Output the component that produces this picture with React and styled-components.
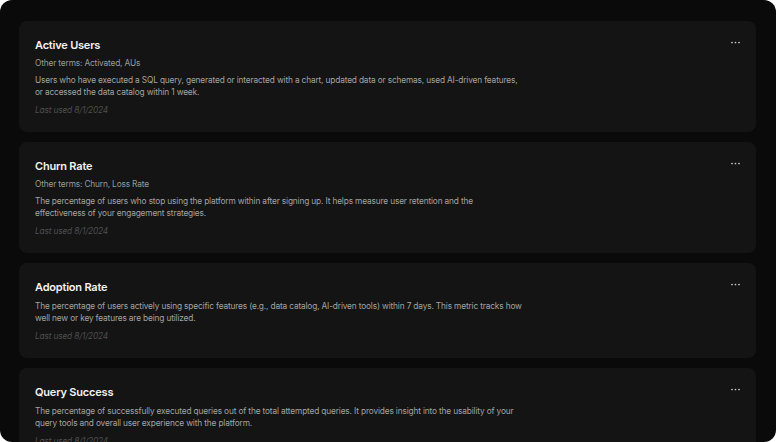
import React from "react";
import styled, { createGlobalStyle } from "styled-components";

const Global = createGlobalStyle`
  html, body { margin: 0; padding: 0; background: #ffffff; }
  body { font-family: Inter, "Noto Sans", sans-serif; -webkit-font-smoothing: antialiased; }
`;

const Frame = styled.div`
  width: 776px;
  height: 442px;
  box-sizing: border-box;
  background: #0a0a0a;
  border-radius: 12px;
  overflow: hidden;
  padding: 21px 20px 0 19px;
  display: flex;
  flex-direction: column;
  gap: 10.5px;
`;

const Card = styled.div`
  flex: none;
  background: #141414;
  border-radius: 8px;
  padding: 16px 16px 15.5px 16px;
  display: flex;
  align-items: flex-start;
  justify-content: space-between;
`;

const Body = styled.div`
  display: flex;
  flex-direction: column;
`;

const Title = styled.div`
  font-size: 11px;
  line-height: 16px;
  font-weight: 600;
  letter-spacing: -0.2px;
  color: #f2f2f2;
`;

const Small = styled.div`
  font-size: 8.3px;
  line-height: 12px;
  letter-spacing: -0.15px;
`;

const Terms = styled(Small)`
  margin-top: 4px;
  color: #9a9a9a;
`;

const Desc = styled(Small)`
  margin-top: 5px;
  width: 490px;
  color: #a3a3a3;
`;

const Used = styled(Small)`
  margin-top: 6px;
  font-style: italic;
  color: #4f4f4f;
`;

const MoreButton = styled.button`
  border: none;
  background: transparent;
  padding: 0;
  margin-top: 2px;
  width: 9px;
  height: 6px;
  display: flex;
  align-items: center;
  justify-content: center;
  color: #cfcfcf;
  cursor: pointer;
`;

const items = [
  {
    title: "Active Users",
    terms: "Other terms: Activated, AUs",
    desc: "Users who have executed a SQL query, generated or interacted with a chart, updated data or schemas, used AI-driven features, or accessed the data catalog within 1 week.",
  },
  {
    title: "Churn Rate",
    terms: "Other terms: Churn, Loss Rate",
    desc: "The percentage of users who stop using the platform within after signing up. It helps measure user retention and the effectiveness of your engagement strategies.",
  },
  {
    title: "Adoption Rate",
    desc: "The percentage of users actively using specific features (e.g., data catalog, AI-driven tools) within 7 days. This metric tracks how well new or key features are being utilized.",
  },
  {
    title: "Query Success",
    desc: "The percentage of successfully executed queries out of the total attempted queries. It provides insight into the usability of your query tools and overall user experience with the platform.",
  },
];

function Dots() {
  return (
    <svg width="9" height="3" viewBox="0 0 9 3">
      <circle cx="1" cy="1.5" r="0.85" fill="currentColor" />
      <circle cx="4.5" cy="1.5" r="0.85" fill="currentColor" />
      <circle cx="8" cy="1.5" r="0.85" fill="currentColor" />
    </svg>
  );
}

export default function App() {
  return (
    <>
      <Global />
      <Frame>
        {items.map((it) => (
          <Card key={it.title}>
            <Body>
              <Title>{it.title}</Title>
              {it.terms && <Terms>{it.terms}</Terms>}
              <Desc>{it.desc}</Desc>
              <Used>Last used 8/1/2024</Used>
            </Body>
            <MoreButton aria-label="More">
              <Dots />
            </MoreButton>
          </Card>
        ))}
      </Frame>
    </>
  );
}
